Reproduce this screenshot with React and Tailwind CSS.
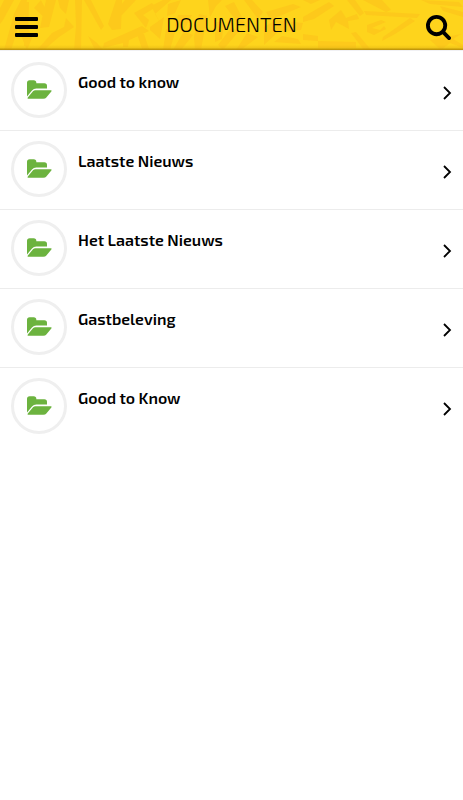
const documents = [
  "Good to know",
  "Laatste Nieuws",
  "Het Laatste Nieuws",
  "Gastbeleving",
  "Good to Know",
];

function HeaderPattern() {
  return (
    <svg
      className="absolute inset-0 size-full"
      viewBox="0 0 463 50"
      preserveAspectRatio="none"
      fill="#fdc91b"
      aria-hidden="true"
    >
      <path d="M4 0h10L3 20l-3 4V8zM14 14l7-14h6l-3 18 8 20-5 12-9-22-7 22H4zM25 2h4l-1 44h-4zM34 8l7-8 8 16-3 3zM46 0h10l-7 27-9 1zM58 0h11l-3 14-6-6zM66 18l8 9-15 10-14 12h-7l14-16 12-6zM75 0h7l-1 50h-7l2-24zM84 0h7l13 26-3 4zM88 36l9 7 6 7h-8zM108 24l8-24h6l-1 29-9 1zM125 0h11l-15 16-6-3zM104 43l38-17 7 5-26 12-20 5zM134 13l18-10 4 4-13 8 6 5-3 8zM123 36l7-3-2 14h-5zM137 34h7l5 15h-7z" />
      <path d="M151 6l12-6h8l-16 14 6 10zM150 27l14-10-4 22-10-9zM168 4l13-4-6 13-8 3zM178 15h14l-8 15-9-4zM166 29l9 3-5 18h-7zM184 31l9 4-12 15h-8zM199 14l8 2-6 34h-6l-1-13zM208 0h14l-6 6-6 11zM215 22h9l-2 17-7 3zM225 6l9-4 13 25-9-4zM244 0h8l11 12-5 7zM218 45l13-17 8 3-16 19zM247 33l11 4-17 13h-5zM266 12l27-8 8 3-31 13zM264 27l12-7 27 3-2 7-23 2-14 13zM282 36l16 3 3 5-27-2z" />
      <path d="M303 17l26-15 5 4-20 13-11 3zM303 0h17l-9 4zM329 20l12-10 5 8 11-4 2 5-11 2 1 8-13-7-5 8zM347 0h8l9 13-4 3zM363 0h19l9 10-5 2zM364 11l56 3-3 4-51-3zM367 25l14-5 5 2-14 6 8 2 4-4 2 3-12 6-7-3zM383 37l27-19 5 3-20 13-13 7zM421 0l38 2 4 5-33-3zM440 6l23 6v5l-20-6zM303 34l15 2v5l-15-1zM318 41l38 1v6h-38zM351 33l5-1 15 18h-7zM430 40l31-6-8 5 10 6v3l-13-5-9 7z" />
    </svg>
  );
}

function FolderIcon() {
  return (
    <svg className="h-[19px] w-[25px]" viewBox="0 0 75 56" fill="#6cb33f" aria-hidden="true">
      <path d="M0 49V8Q0 0 8 0H20Q28 0 28 8V9H52Q60 9 60 17V25H28Q20 25 15 31Z" />
      <path d="M25 30H71Q76 30 73 34L58 52Q55 56 49 56H4Q0 55 3 51L18 33Q21 30 25 30Z" />
    </svg>
  );
}

export default function App() {
  return (
    <div className="min-h-screen bg-white font-['Exo_2','Open_Sans',sans-serif] text-black">
      <header className="relative h-[50px] bg-[#fed41c]">
        <HeaderPattern />
        <div className="absolute inset-x-0 bottom-0 h-[5px] bg-linear-to-t from-[#b58c08] via-[#e0b313]/40 to-transparent" />
        <div className="relative flex h-full items-center justify-between px-3">
          <button type="button" aria-label="Menu" className="flex size-7 items-center justify-center pt-1">
            <svg className="h-5 w-[23px]" viewBox="0 0 23 20" aria-hidden="true">
              <rect width="23" height="4" rx="1" />
              <rect y="8" width="23" height="4" rx="1" />
              <rect y="16" width="23" height="4" rx="1" />
            </svg>
          </button>
          <h1 className="pb-0.5 text-[20px] leading-6 font-light">DOCUMENTEN</h1>
          <button type="button" aria-label="Zoeken" className="flex size-7 items-center justify-end pt-1">
            <svg className="size-[25px]" viewBox="64 128 1664 1664" aria-hidden="true">
              <path d="M1216 832q0-185-131.5-316.5t-316.5-131.5-316.5 131.5-131.5 316.5 131.5 316.5 316.5 131.5 316.5-131.5 131.5-316.5zm512 832q0 52-38 90t-90 38q-54 0-90-38l-343-342q-179 124-399 124-143 0-273.500-55.500t-225-150-150-225-55.500-273.500 55.500-273.500 150-225 225-150 273.500-55.500 273.500 55.500 225 150 150 225 55.500 273.500q0 220-124 399l343 343q37 37 37 90z" />
            </svg>
          </button>
        </div>
      </header>
      <ul className="border-t border-[#f1f1f4]">
        {documents.map((title) => (
          <li key={title} className="border-[#ececec] not-first:border-t first:pt-px">
            <a href="#" className="flex h-[78px] items-start gap-[11px] px-[11px] pt-[10px]">
              <span className="flex size-14 shrink-0 items-center justify-center rounded-full border-[3px] border-[#efefef] pb-0.5">
                <FolderIcon />
              </span>
              <span className="min-w-0 flex-1 truncate text-[16px] leading-10 font-semibold">{title}</span>
              <svg
                className="mt-6 h-[14px] w-[9px] shrink-0"
                viewBox="0 0 9 14"
                fill="none"
                stroke="currentColor"
                strokeWidth="1.8"
                aria-hidden="true"
              >
                <path d="M1 1 7 7 1 13" />
              </svg>
            </a>
          </li>
        ))}
      </ul>
    </div>
  );
}
